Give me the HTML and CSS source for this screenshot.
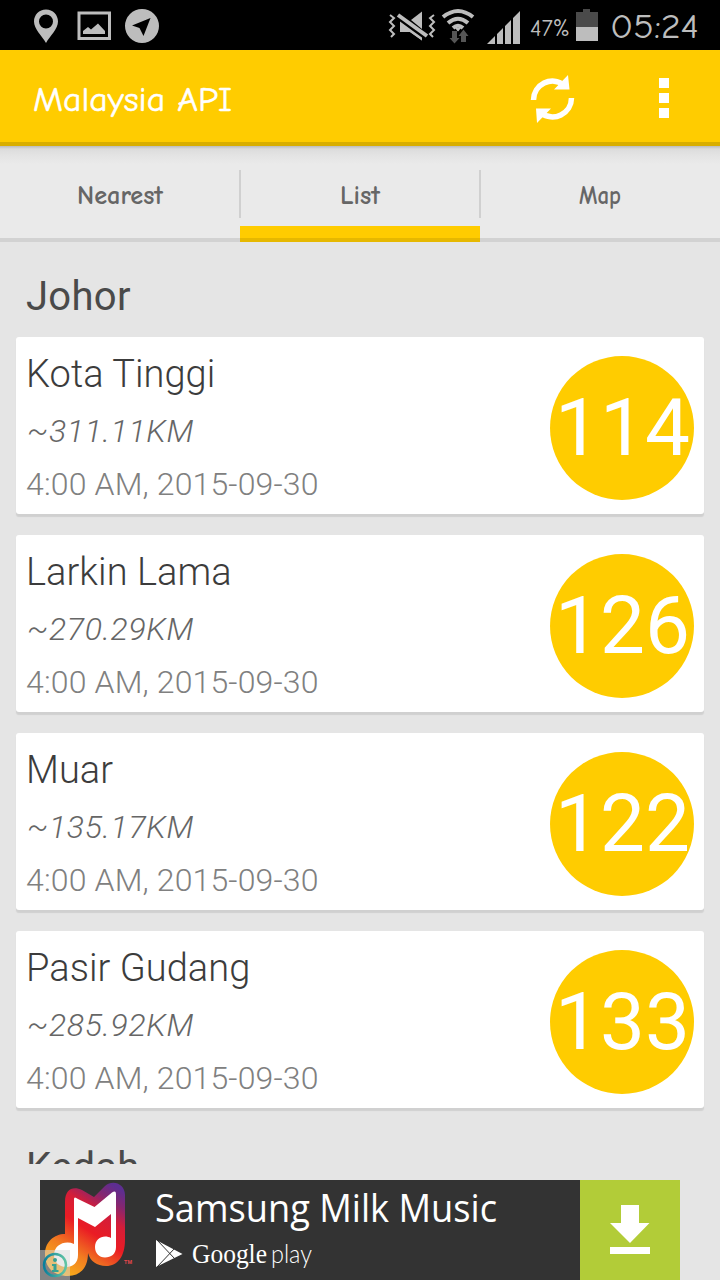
FILE: index.html
```
<!DOCTYPE html>
<html lang="en">
<head>
<meta charset="utf-8">
<title>Malaysia API</title>
<link rel="stylesheet" href="styles.css">
</head>
<body>
<div class="screen">
  <header class="status">
    <svg class="status-art" width="720" height="50" viewBox="0 0 720 50" fill="#bdbdbd">
      <path fill-rule="evenodd" d="M46 9.500C39 9.500 34 15 34 21.500C34 29 42 36 46 43C50 36 58 29 58 21.500C58 15 53 9.500 46 9.500ZM46 14.500A7 7 0 1 1 46 28.500A7 7 0 1 1 46 14.500Z"/>
      <path fill-rule="evenodd" d="M77.500 11.500H111V40H77.500ZM80.500 14.500V37H108V14.500ZM83 34V31L88 27L91 29.500L98 23.500L105 31V34Z"/>
      <path fill-rule="evenodd" d="M142 9A17 17 0 1 1 142 43A17 17 0 1 1 142 9ZM150.500 18L132 25.500L139.500 28L143.500 36Z"/>
      <path d="M411 20L422 11.500V29Z"/>
      <path d="M400 21L422 36.500V40.500L410 32H400Z"/>
      <path d="M397 16L426 37" stroke="#000" stroke-width="7"/>
      <path d="M398 15L427 36" stroke="#bdbdbd" stroke-width="4"/>
      <path d="M400 21.500L415 32.500L422 37.500V40.500L410 32H400Z"/>
      <path d="M390 15L394 18L390 22L394 26L390 30L394 34L391 37M434 15L430 18L434 22L430 26L434 30L430 34L433 37" fill="none" stroke="#bdbdbd" stroke-width="2"/>
      <g fill="none" stroke="#bdbdbd" stroke-width="4">
        <path d="M443 17Q458 5 473 17M448 23Q458 14.500 468 23M453 28Q458 23.500 463 28"/>
      </g>
      <path d="M455 28H461L458 31.500Z"/>
      <path fill="#555" d="M452 31H457V38H459.500L454.500 43.500L449.500 38H452ZM461 42V36H458.500L463.500 29.500L468.500 36H466V42Z"/>
      <path d="M487 44L495 36V44ZM497 44V34L503 28V44ZM505 44V26L511 20V44ZM513 44V18L520 11V44Z"/>
      <path fill="#4a4a4a" d="M583 9H590V12H598V27H576V12H583Z"/>
      <path d="M576 27H598V41H576Z"/>
      <g class="hand">
        <text x="530" y="36" font-size="25" textLength="40" lengthAdjust="spacingAndGlyphs">47%</text>
        <text x="610" y="38" font-size="34" textLength="89" lengthAdjust="spacingAndGlyphs">05:24</text>
      </g>
    </svg>
  </header>

  <div class="appbar">
    <svg class="title hand" width="220" height="92" viewBox="0 0 220 92" fill="#fff">
      <text x="1" y="61" font-size="34" textLength="199" lengthAdjust="spacingAndGlyphs" stroke="#fff" stroke-width=".5">Malaysia API</text>
    </svg>
    <svg class="refresh" width="46" height="50" viewBox="0 0 46 50">
      <path d="M3.500 26A19 19 0 0 1 34 11M41.500 24A19 19 0 0 1 11 39" fill="none" stroke="#fff" stroke-width="5.500"/>
      <path fill="#fff" d="M38 1L39.500 15.500H24ZM7 49L6 34.500H21Z"/>
    </svg>
    <div class="more"><i></i><i></i><i></i></div>
  </div>

  <nav class="tabs hand">
    <div class="tab"><svg width="96" height="40"><text x="5" y="28" font-size="26" textLength="86" lengthAdjust="spacingAndGlyphs">Nearest</text></svg></div>
    <div class="tab active"><svg width="50" height="40"><text x="5" y="28" font-size="26" textLength="40" lengthAdjust="spacingAndGlyphs">List</text></svg></div>
    <div class="tab"><svg width="52" height="40"><text x="5" y="28" font-size="26" textLength="42" lengthAdjust="spacingAndGlyphs">Map</text></svg></div>
  </nav>

  <main class="list">
    <h2>Johor</h2>
    <article class="card"><div class="info"><h3>Kota Tinggi</h3><em>~311.11KM</em><p>4:00 AM, 2015-09-30</p></div><b class="badge">114</b></article>
    <article class="card"><div class="info"><h3>Larkin Lama</h3><em>~270.29KM</em><p>4:00 AM, 2015-09-30</p></div><b class="badge">126</b></article>
    <article class="card"><div class="info"><h3>Muar</h3><em>~135.17KM</em><p>4:00 AM, 2015-09-30</p></div><b class="badge">122</b></article>
    <article class="card"><div class="info"><h3>Pasir Gudang</h3><em>~285.92KM</em><p>4:00 AM, 2015-09-30</p></div><b class="badge">133</b></article>
    <h2>Kedah</h2>
  </main>

  <footer class="ad">
    <svg width="540" height="100" viewBox="40 1180 540 100">
      <defs>
        <linearGradient id="milk" gradientUnits="userSpaceOnUse" x1="62" y1="1275" x2="118" y2="1188">
          <stop offset="0" stop-color="#f9b21a"/><stop offset=".25" stop-color="#f17c21"/><stop offset=".5" stop-color="#ea1c24"/><stop offset=".7" stop-color="#d51d38"/><stop offset=".86" stop-color="#86266f"/><stop offset="1" stop-color="#5d2e91"/>
        </linearGradient>
        <linearGradient id="info" x1="0" x2="1"><stop offset="0" stop-color="#087f9c"/><stop offset="1" stop-color="#62c5a4"/></linearGradient>
      </defs>
      <path fill="url(#milk)" d="M65 1202C65 1189 73 1186 82 1190L94 1197L105 1186C113 1179 125 1184 125 1195V1240C125 1256 118 1266 106 1266C97 1266 90 1261 88 1253C88 1268 80 1276 68 1276C54 1276 45 1268 45 1254C45 1242 54 1234 65 1234Z"/>
      <path fill="#fff" d="M74 1199Q74 1196 78 1199L94.500 1207L112 1192.500Q116 1190 116 1194V1247C116 1254 111 1257.500 105 1257.500C99 1257.500 95 1253 95 1247C95 1238 104 1234 111 1238V1214L95 1227L78 1218V1255C78 1263 73 1267 66 1267C59 1267 54 1262 54 1255C54 1245 65 1240 74 1244Z"/>
      <text x="124" y="1264" font-family="Liberation Sans" font-weight="700" font-size="5.500" fill="#e9474d" textLength="8">TM</text>
      <path d="M40 1250H70V1280H40Z" fill="#d5d5d5" fill-opacity=".5"/>
      <circle cx="55" cy="1265" r="11" fill="none" stroke="url(#info)" stroke-width="2.500"/>
      <circle cx="55" cy="1260" r="2" fill="#369f91"/>
      <path d="M52 1264H56.500V1270H58.500V1272H52V1270H53.500V1266H52Z" fill="#36a193"/>
      <text class="ad-title" x="155" y="1222" textLength="342" lengthAdjust="spacingAndGlyphs">Samsung Milk Music</text>
      <path d="M156 1240L182.500 1254L156 1267Z" fill="#fff"/>
      <path d="M157 1240L175 1259M157 1267L175 1248" stroke="#333" stroke-width="1"/>
      <text class="google" x="192" y="1263" textLength="75" lengthAdjust="spacingAndGlyphs">Google</text>
      <text class="play" x="271" y="1263" textLength="41" lengthAdjust="spacingAndGlyphs">play</text>
    </svg>
    <div class="download">
      <svg width="40" height="50" viewBox="0 0 40 50" fill="#fff"><path d="M11 0H29V18H39.500L20 38L0 18H11ZM0 42H40V49H0Z"/></svg>
    </div>
  </footer>
</div>
</body>
</html>
```
FILE: styles.css
```
* { box-sizing: border-box; }
body { margin: 0; background: #e5e5e5; font-family: Roboto, sans-serif; }
.screen { width: 720px; height: 1280px; display: flex; flex-direction: column; overflow: hidden; }
svg { display: block; flex: none; }
.hand { font-family: "Comic Neue", "Comic Sans MS", Lato, sans-serif; }

.status { height: 50px; background: #000; flex: none; }

.appbar { height: 96px; flex: none; background: #ffcc00; border-bottom: 4px solid #d9ae00; display: flex; align-items: center; padding: 0 51px 0 32px; }
.title { margin-right: auto; }
.refresh { margin: 6px 83px 0 0; }
.more { display: grid; gap: 5px; margin-top: 4px; }
.more i { width: 10px; height: 10px; background: #fff; }

.tabs { height: 96px; flex: none; display: flex; border-bottom: 4px solid #d2d2d2; background: linear-gradient(#bcbcbc 0, #dcdcdc 3px, #e3e3e3 9px, #eaeaea 18px); }
.tab { flex: 1; height: 96px; display: flex; justify-content: center; align-items: center; padding-top: 4px; font-weight: 700; fill: #666; background: linear-gradient(#d0d0d0, #d0d0d0) right 24px / 1px 48px no-repeat; }
.tab:last-child { background: linear-gradient(#d0d0d0, #d0d0d0) left 24px / 1px 48px no-repeat; }
.tab.active { background: linear-gradient(#d0d0d0, #d0d0d0) left 24px / 1px 48px no-repeat, linear-gradient(#d0d0d0, #d0d0d0) right 24px / 1px 48px no-repeat, linear-gradient(transparent 80px, #ffcc00 80px, #ffcc00 92px, #e6b800 92px); }

.list { height: 922px; flex: none; overflow: hidden; padding: 16px 16px 0; }
h2, h3, p { margin: 0; font-weight: 400; }
h2 { height: 79px; padding-left: 10px; font-size: 40px; line-height: 77px; letter-spacing: .3px; color: #4a4a4a; }
.card { height: 177px; margin-bottom: 21px; padding: 10px; background: #fff; border-radius: 3px; box-shadow: 0 3px 1px #d0d0d0; display: flex; justify-content: space-between; }
.info { white-space: nowrap; font-weight: 300; }
h3 { font-size: 38px; line-height: 54px; font-weight: 300; color: #3c3c3c; letter-spacing: .05px; }
em { display: block; width: 168px; overflow: hidden; padding-left: 1px; font-size: 32px; line-height: 60px; color: #666; letter-spacing: .65px; }
p { font-size: 32px; line-height: 46px; font-weight: 300; color: #808080; letter-spacing: .15px; }
.badge { width: 144px; height: 144px; margin-top: 9px; padding-left: 1px; border-radius: 50%; background: #ffcc00; color: #fff; font-size: 80px; line-height: 144px; font-weight: 400; text-align: center; }

.ad { width: 640px; height: 100px; margin: 16px 40px 0; flex: none; display: flex; background: #333; }
.ad-title { font: 38px "Open Sans", "Noto Sans", sans-serif; fill: #fff; }
.google { font: 27px "Liberation Serif", serif; fill: #fff; }
.play { font: 300 26px Lato, sans-serif; fill: #fff; }
.download { width: 100px; background: #b2cc38; display: flex; justify-content: center; align-items: center; }
```
